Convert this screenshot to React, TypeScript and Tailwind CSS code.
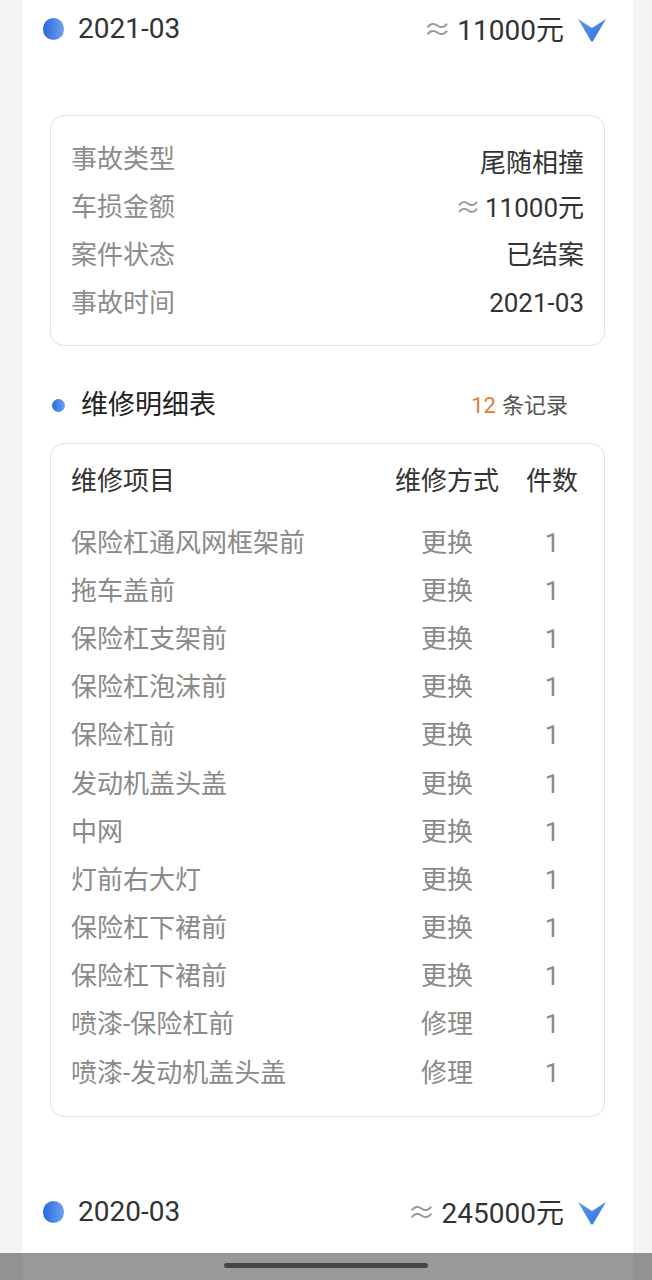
import type { ReactNode } from 'react';

type Repair = { name: string; method: string; count: number };

const repairs: Repair[] = [
  { name: '保险杠通风网框架前', method: '更换', count: 1 },
  { name: '拖车盖前', method: '更换', count: 1 },
  { name: '保险杠支架前', method: '更换', count: 1 },
  { name: '保险杠泡沫前', method: '更换', count: 1 },
  { name: '保险杠前', method: '更换', count: 1 },
  { name: '发动机盖头盖', method: '更换', count: 1 },
  { name: '中网', method: '更换', count: 1 },
  { name: '灯前右大灯', method: '更换', count: 1 },
  { name: '保险杠下裙前', method: '更换', count: 1 },
  { name: '保险杠下裙前', method: '更换', count: 1 },
  { name: '喷漆-保险杠前', method: '修理', count: 1 },
  { name: '喷漆-发动机盖头盖', method: '修理', count: 1 },
];

// the ≈ glyph comes from the CJK font, Roboto's is too small
function Approx({ className }: { className: string }) {
  return <span className={`font-['Noto_Sans_CJK_SC'] text-[#9a9a9a] ${className}`}>≈</span>;
}

const info: { label: string; value: ReactNode }[] = [
  { label: '事故类型', value: <span className="relative top-[4px]">尾随相撞</span> },
  {
    label: '车损金额',
    value: (
      <>
        <Approx className="mr-[4px]" />
        11000元
      </>
    ),
  },
  { label: '案件状态', value: '已结案' },
  { label: '事故时间', value: '2021-03' },
];

function Chevron() {
  return (
    <svg width="28" height="24" viewBox="0 0 28 24">
      <defs>
        <linearGradient id="chev" x1="0" y1="0" x2="1" y2="1">
          <stop offset="0" stopColor="#5d9cf0" />
          <stop offset="1" stopColor="#2f70dc" />
        </linearGradient>
      </defs>
      <path d="M0 1 L14 10 L28 1 L15 23 Q14 24 13 23 Z" fill="url(#chev)" />
    </svg>
  );
}

function YearHeader({ date, amount }: { date: string; amount: string }) {
  return (
    <div className="h-[56px] flex items-center pl-[21px] pr-[27px]">
      <span className="w-[21px] h-[22px] rounded-full bg-gradient-to-r from-[#2a66dc] to-[#6ea3f2]" />
      <span className="ml-[14px] text-[28px] text-[#333]">{date}</span>
      <span className="ml-auto text-[28px] text-[#333]">
        <Approx className="mr-[6px]" />
        {amount}元
      </span>
      <span className="ml-[14px] mt-[2px]">
        <Chevron />
      </span>
    </div>
  );
}

export default function App() {
  return (
    <div
      className="relative h-[1280px] overflow-hidden bg-[#f5f3f4] pl-[22px] pr-[19px]"
      style={{ fontFamily: 'Roboto, "Noto Sans CJK SC", sans-serif' }}
    >
      <div className="bg-white h-full pt-[1px]">
        <YearHeader date="2021-03" amount="11000" />

        <div className="mx-[28px] mt-[58px] border border-[#e2e2e2] rounded-[14px] pt-[19px] pb-[18px] px-[20px]">
          {info.map((row) => (
            <div key={row.label} className="h-[48px] flex items-center justify-between text-[26px]">
              <span className="text-[#8c8c8c]">{row.label}</span>
              <span className="text-[#333]">{row.value}</span>
            </div>
          ))}
        </div>

        <div className="mt-[35px] mx-[28px] h-[48px] flex items-center pl-[2px] pr-[37px]">
          <span className="w-[13px] h-[13px] rounded-full bg-gradient-to-r from-[#2a66dc] to-[#6ea3f2]" />
          <span className="ml-[16px] text-[27px] text-[#222]">维修明细表</span>
          <span className="ml-auto text-[22px] text-[#555]">
            <span className="text-[#e07b39] mr-[6px]">12</span>条记录
          </span>
        </div>

        <div className="mx-[28px] mt-[14px] border border-[#e2e2e2] rounded-[14px] pt-[13px] pb-[19px] pl-[20px] pr-[21px]">
          <div className="grid grid-cols-[1fr_112px_62px] gap-x-[18px] h-[48px] items-center text-[26px] text-[#333]">
            <span>维修项目</span>
            <span className="text-center">维修方式</span>
            <span className="text-center">件数</span>
          </div>
          <div className="mt-[14px]">
            {repairs.map((r, i) => (
              <div
                key={i}
                className="grid grid-cols-[1fr_112px_62px] gap-x-[18px] h-[48.2px] items-center text-[26px] text-[#8a8a8a]"
              >
                <span>{r.name}</span>
                <span className="text-center">{r.method}</span>
                <span className="text-center">{r.count}</span>
              </div>
            ))}
          </div>
        </div>

        <div className="mt-[67px]">
          <YearHeader date="2020-03" amount="245000" />
        </div>
      </div>

      <div className="absolute left-0 right-0 bottom-0 h-[27px] bg-[rgba(0,0,0,0.4)] flex justify-center">
        <span className="mt-[10px] w-[204px] h-[5px] rounded-full bg-[#464646]" />
      </div>
    </div>
  );
}
